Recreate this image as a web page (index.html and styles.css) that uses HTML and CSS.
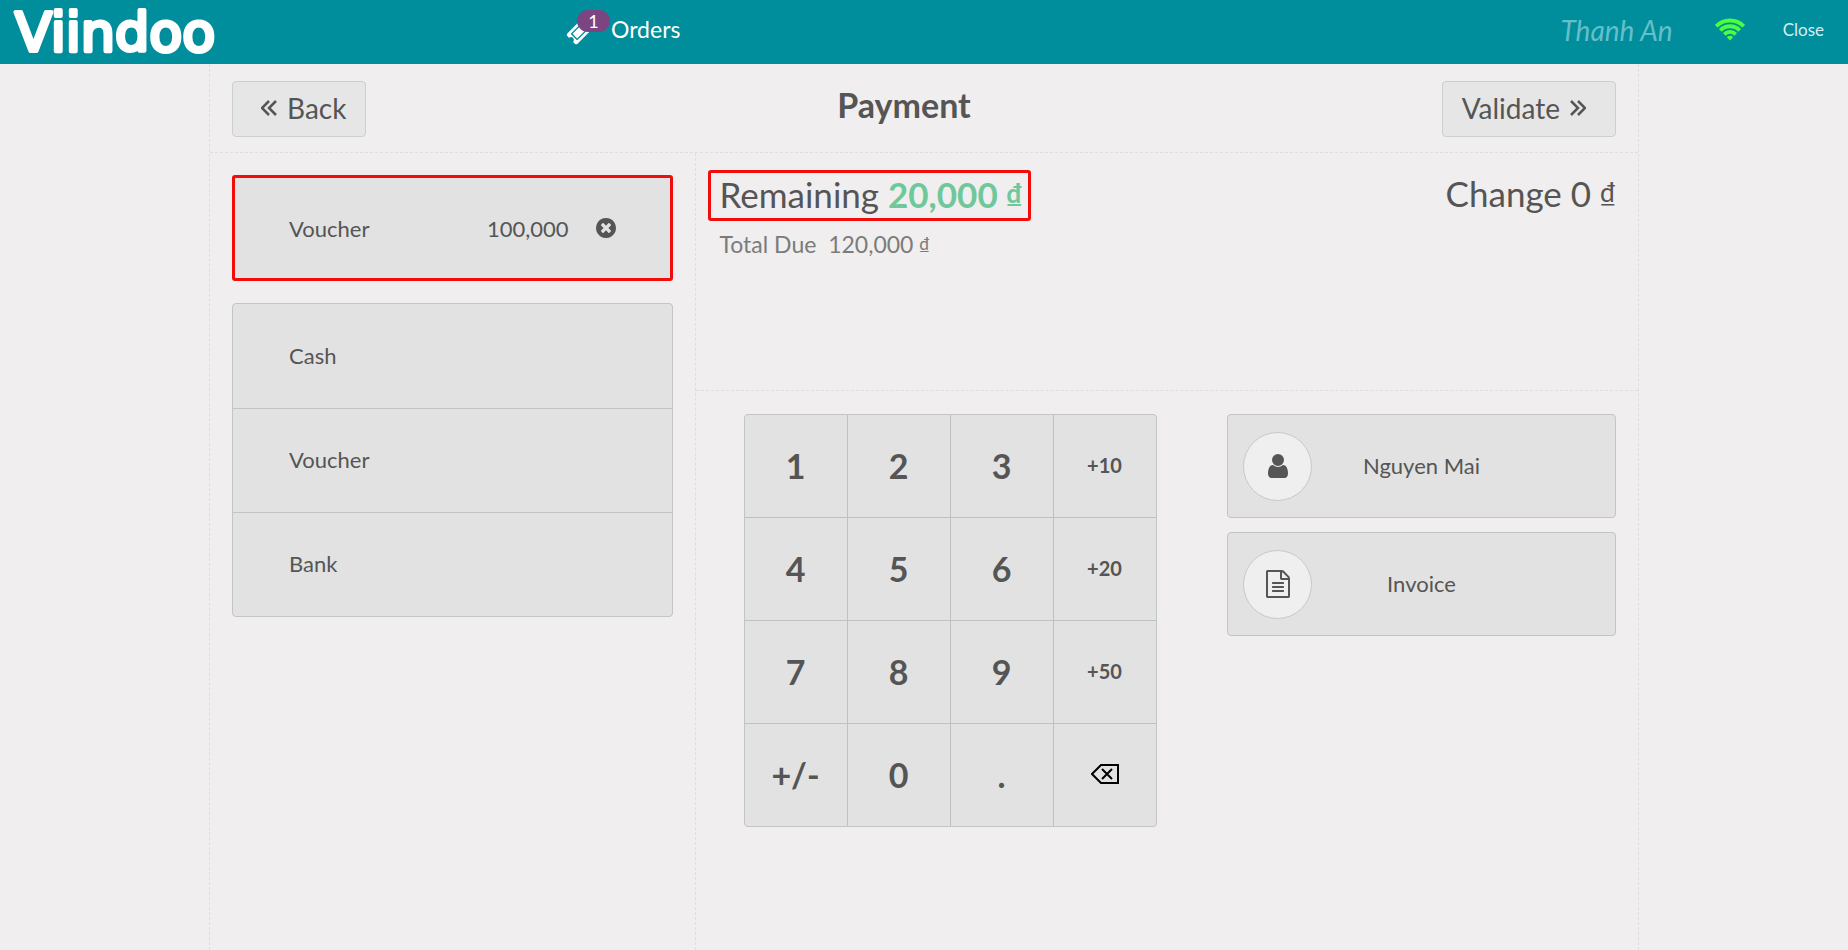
FILE: index.html
```html
<!DOCTYPE html>
<html lang="en">
<head>
    <meta charset="UTF-8">
    <meta name="viewport" content="width=device-width, initial-scale=1.0">
    <title>Viindoo - Payment</title>
    <link rel="stylesheet" href="styles.css">
</head>
<body>
    <header class="topbar">
        <div class="branding">
            <svg class="logo" viewBox="0 0 240 64" role="img" aria-label="Viindoo">
                <text x="15" y="51">Viindoo</text>
            </svg>
        </div>
        <button type="button" class="orders">
            <span class="ticket">
                <svg viewBox="0 0 1792 1792" width="26" height="26"><path d="M1024 452l316 316-572 572-316-316zm-211 979l618-618q19-19 19-45t-19-45l-362-362q-18-18-45-18t-45 18l-618 618q-19 19-19 45t19 45l362 362q18 18 45 18t45-18zm889-637l-907 908q-37 37-90.5 37t-90.5-37l-126-125q56-56 56-136t-56-136-136-56-136 56l-125-126q-37-37-37-90.5t37-90.5l907-906q37-37 90.5-37t90.5 37l125 125q-56 56-56 136t56 136 136 56 136-56l126 125q37 37 37 90.5t-37 90.5z"/></svg>
                <span class="badge">1</span>
            </span>
            <span>Orders</span>
        </button>
        <span class="username">Thanh An</span>
        <svg class="wifi" viewBox="0 0 30 23" width="30" height="23">
            <g fill="none" stroke="#4cff3c" stroke-width="3.8">
                <path d="M1.2 8.2 A19.5 19.5 0 0 1 28.8 8.2"/>
                <path d="M5.3 12.3 A13.7 13.7 0 0 1 24.7 12.3"/>
                <path d="M9.3 16.3 A8 8 0 0 1 20.7 16.3"/>
            </g>
            <path fill="#4cff3c" d="M11.8 19.2 A4.5 4.5 0 0 1 18.2 19.2 L15 22.5 Z"/>
        </svg>
        <button type="button" class="close">Close</button>
    </header>

    <main class="screen">
        <div class="top-content">
            <button type="button" class="nav-btn back">
                <svg viewBox="0 0 16 16" width="16" height="16"><path d="M8 1 L1 8 L8 15 M15 1 L8 8 L15 15"/></svg>
                Back
            </button>
            <h1>Payment</h1>
            <button type="button" class="nav-btn next">
                Validate
                <svg viewBox="0 0 16 16" width="16" height="16"><path d="M1 1 L8 8 L1 15 M8 1 L15 8 L8 15"/></svg>
            </button>
        </div>

        <div class="content">
            <section class="left-content">
                <div class="paymentline highlight">
                    <span class="name">Voucher</span>
                    <span class="amount">100,000</span>
                    <button type="button" class="delete" aria-label="Delete">
                        <svg viewBox="128 128 1536 1536" width="20" height="20"><path d="M1277 1122q0-26-19-45l-181-181 181-181q19-19 19-45 0-27-19-46l-90-90q-19-19-46-19-26 0-45 19l-181 181-181-181q-19-19-45-19-27 0-46 19l-90 90q-19 19-19 46 0 26 19 45l181 181-181 181q-19 19-19 45 0 27 19 46l90 90q19 19 46 19 26 0 45-19l181-181 181 181q19 19 45 19 27 0 46-19l90-90q19-19 19-46zm387-226q0 209-103 385.5t-279.5 279.5-385.5 103-385.5-103-279.5-279.5-103-385.5 103-385.5 279.5-279.5 385.5-103 385.5 103 279.5 279.5 103 385.5z"/></svg>
                    </button>
                </div>
                <div class="paymentmethods">
                    <button type="button">Cash</button>
                    <button type="button">Voucher</button>
                    <button type="button">Bank</button>
                </div>
            </section>

            <section class="right-content">
                <div class="payment-status">
                    <div>
                        <div class="remaining highlight">Remaining <span class="amount">20,000 <span class="currency">₫</span></span></div>
                        <div class="total-due">Total Due&nbsp; 120,000 <span class="currency">₫</span></div>
                    </div>
                    <div class="change">Change 0 <span class="currency">₫</span></div>
                </div>

                <div class="payment-inputs">
                    <div class="numpad">
                        <button type="button">1</button>
                        <button type="button">2</button>
                        <button type="button">3</button>
                        <button type="button" class="mode">+10</button>
                        <button type="button">4</button>
                        <button type="button">5</button>
                        <button type="button">6</button>
                        <button type="button" class="mode">+20</button>
                        <button type="button">7</button>
                        <button type="button">8</button>
                        <button type="button">9</button>
                        <button type="button" class="mode">+50</button>
                        <button type="button">+/-</button>
                        <button type="button">0</button>
                        <button type="button">.</button>
                        <button type="button" aria-label="Backspace">
                            <svg viewBox="0 0 28 20" width="28" height="20"><path fill="none" stroke="#000" stroke-width="2" d="M10 1 H27 V19 H10 L1 10 Z M11 5 L21 15 M21 5 L11 15"/></svg>
                        </button>
                    </div>
                    <div class="payment-buttons">
                        <button type="button">
                            <span class="icon">
                                <svg viewBox="256 128 1280 1536" width="20" height="24"><path d="M1536 1399q0 109-62.5 187t-150.5 78h-854q-88 0-150.5-78t-62.5-187q0-85 8.5-160.5t31.5-152 58.5-131 94-89 134.5-34.5q131 128 313 128t313-128q76 0 134.5 34.5t94 89 58.5 131 31.5 152 8.5 160.5zm-256-887q0 159-112.5 271.5t-271.5 112.5-271.5-112.5-112.5-271.5 112.5-271.5 271.5-112.5 271.5 112.5 112.5 271.5z"/></svg>
                            </span>
                            <span class="label">Nguyen Mai</span>
                        </button>
                        <button type="button">
                            <span class="icon">
                                <svg viewBox="128 0 1536 1792" width="24" height="28"><path d="M1596 380q28 28 48 76t20 88v1152q0 40-28 68t-68 28h-1344q-40 0-68-28t-28-68v-1600q0-40 28-68t68-28h896q40 0 88 20t76 48zm-444-244v376h376q-10-29-22-41l-313-313q-12-12-41-22zm384 1528v-1024h-416q-40 0-68-28t-28-68v-416h-768v1536h1280zm-1024-864q0-14 9-23t23-9h704q14 0 23 9t9 23v64q0 14-9 23t-23 9h-704q-14 0-23-9t-9-23v-64zm736 224q14 0 23 9t9 23v64q0 14-9 23t-23 9h-704q-14 0-23-9t-9-23v-64q0-14 9-23t23-9h704zm0 256q14 0 23 9t9 23v64q0 14-9 23t-23 9h-704q-14 0-23-9t-9-23v-64q0-14 9-23t23-9h704z"/></svg>
                            </span>
                            <span class="label">Invoice</span>
                        </button>
                    </div>
                </div>
            </section>
        </div>
    </main>
</body>
</html>
```
FILE: styles.css
```css
* {
    box-sizing: border-box;
}
body {
    margin: 0;
    min-height: 100vh;
    display: flex;
    flex-direction: column;
    background: #f0eeee;
    color: #555;
    font-family: Lato, "Liberation Sans", sans-serif;
    font-size: 22px;
}
button {
    margin: 0;
    padding: 0;
    border: none;
    background: none;
    color: inherit;
    font: inherit;
    cursor: pointer;
}
svg {
    display: block;
    fill: #555;
}

/* top bar */
.topbar {
    display: flex;
    align-items: center;
    height: 64px;
    padding: 0 24px 6px 0;
    background: #008d9c;
    color: #fff;
}
.branding {
    flex: 0 0 566px;
    align-self: flex-start;
}
.logo {
    width: 240px;
    height: 64px;
}
.logo text {
    fill: #fff;
    stroke: #fff;
    stroke-width: 4px;
    stroke-linejoin: round;
    font-family: "DejaVu Sans", sans-serif;
    font-size: 54px;
}
.orders {
    display: flex;
    align-items: center;
    margin-right: auto;
    font-size: 23px;
}
.ticket {
    position: relative;
    width: 45px;
    padding-top: 6px;
}
.ticket svg {
    fill: #fff;
}
.badge {
    position: absolute;
    top: -3px;
    left: 11px;
    width: 33px;
    height: 22px;
    border-radius: 11px;
    background: #7c4582;
    font-size: 18px;
    line-height: 22px;
    text-align: center;
}
.username {
    padding-top: 2px;
    margin-right: 42px;
    color: #63c0ca;
    font-size: 28px;
    font-style: italic;
}
.wifi {
    margin-right: 38px;
}
.close {
    color: #d5eff2;
    font-size: 17px;
}

/* payment screen */
.screen {
    flex: 1;
    display: flex;
    flex-direction: column;
    width: 100%;
    max-width: 1430px;
    margin: 0 auto;
    border: 1px dashed #dfdddd;
    border-width: 0 1px;
}
.top-content {
    display: flex;
    justify-content: space-between;
    align-items: flex-start;
    padding: 17px 22px 15px;
    border-bottom: 1px dashed #dfdddd;
}
.top-content h1 {
    margin: 0;
    font-size: 34px;
    line-height: 48px;
}
.nav-btn {
    display: flex;
    align-items: center;
    gap: 10px;
    height: 56px;
    border: 1px solid #cdcfcf;
    border-radius: 4px;
    background: #e6e6e6;
    font-size: 28px;
}
.nav-btn path {
    fill: none;
    stroke: #555;
    stroke-width: 2.5px;
}
.back {
    padding: 0 19px 2px 28px;
}
.next {
    padding: 0 29px 2px 19px;
}
.content {
    flex: 1;
    display: flex;
}
.left-content {
    flex: 0 0 34%;
    padding: 22px;
    border-right: 1px dashed #dfdddd;
}
.highlight {
    border: 3px solid #f20d0d;
    border-radius: 3px;
}
.paymentline {
    display: flex;
    align-items: center;
    height: 106px;
    margin-bottom: 22px;
    padding: 0 54px;
    background: #e2e2e2;
}
.paymentline .amount {
    margin-left: auto;
}
.delete {
    margin-left: 27px;
}
.paymentmethods,
.numpad,
.payment-buttons button {
    border: 1px solid #c3c4c4;
    border-radius: 4px;
    background: #e2e2e2;
}
.paymentmethods button {
    display: block;
    width: 100%;
    height: 104px;
    padding: 0 56px 2px;
    text-align: left;
}
.paymentmethods button + button {
    border-top: 1px solid #c3c4c4;
}

.right-content {
    flex: 1;
}
.payment-status {
    display: flex;
    justify-content: space-between;
    height: 238px;
    padding: 17px 22px 0 12px;
    border-bottom: 1px dashed #dfdddd;
    font-size: 35px;
}
.remaining {
    padding: 0 6px 3px 9px;
    line-height: 42px;
}
.remaining .amount {
    color: #6ec89b;
    font-weight: bold;
}
.currency {
    font-size: 75%;
    line-height: 1;
    vertical-align: 20%;
}
.total-due {
    padding: 9px 12px;
    color: #7b7b7b;
    font-size: 23px;
}
.change {
    line-height: 46px;
}
.payment-inputs {
    display: flex;
    justify-content: space-between;
    align-items: flex-start;
    padding: 23px 22px 0 48px;
}
.numpad {
    display: grid;
    grid-template-columns: repeat(4, 102px);
    grid-auto-rows: 102px;
    gap: 1px;
    overflow: hidden;
    background: #bfc0c0;
}
.numpad button {
    display: flex;
    align-items: center;
    justify-content: center;
    padding-bottom: 2px;
    background: #e2e2e2;
    font-size: 34px;
    font-weight: bold;
}
.numpad .mode {
    font-size: 20px;
}
.payment-buttons {
    flex: 0 0 389px;
    display: grid;
    gap: 14px;
}
.payment-buttons button {
    display: flex;
    align-items: center;
    height: 104px;
    padding-left: 15px;
}
.icon {
    display: flex;
    align-items: center;
    justify-content: center;
    width: 69px;
    height: 69px;
    border: 1px solid #c8c8c8;
    border-radius: 50%;
    background: #efefef;
}
.label {
    flex: 1;
    padding: 0 84px 2px 0;
    text-align: center;
}
```
